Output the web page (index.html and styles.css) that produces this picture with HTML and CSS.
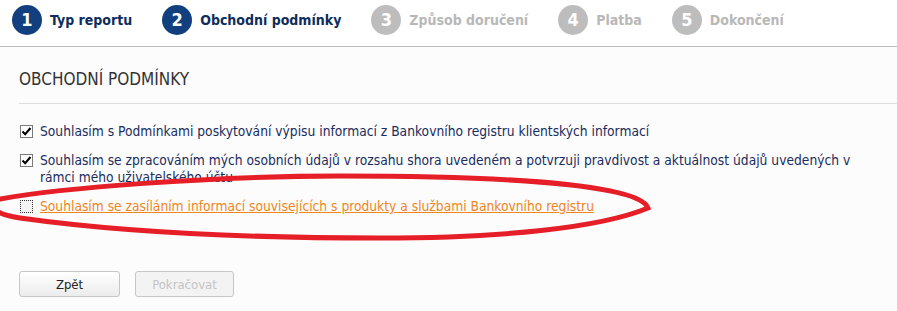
FILE: index.html
```html
<!DOCTYPE html>
<html lang="cs">
<head>
<meta charset="UTF-8">
<title>Obchodní podmínky</title>
<link rel="stylesheet" href="styles.css">
</head>
<body>
<div class="page">
  <ul class="steps">
    <li class="step done"><span class="num">1</span>Typ reportu</li>
    <li class="step done"><span class="num">2</span>Obchodní podmínky</li>
    <li class="step"><span class="num">3</span>Způsob doručení</li>
    <li class="step"><span class="num">4</span>Platba</li>
    <li class="step"><span class="num">5</span>Dokončení</li>
  </ul>

  <div class="content">
    <h2 class="title">OBCHODNÍ PODMÍNKY</h2>

    <ul class="terms">
      <li class="term">
        <span class="box checked"><svg width="11" height="11" viewBox="0 0 11 11"><path d="M1.5 5.5 L4.2 8.2 L9.5 2" fill="none" stroke="#000" stroke-width="2"/></svg></span>
        <span class="label">Souhlasím s Podmínkami poskytování výpisu informací z Bankovního registru klientských informací</span>
      </li>
      <li class="term">
        <span class="box checked"><svg width="11" height="11" viewBox="0 0 11 11"><path d="M1.5 5.5 L4.2 8.2 L9.5 2" fill="none" stroke="#000" stroke-width="2"/></svg></span>
        <span class="label">Souhlasím se zpracováním mých osobních údajů v rozsahu shora uvedeném a potvrzuji pravdivost a aktuálnost údajů uvedených v rámci mého uživatelského účtu</span>
      </li>
      <li class="term">
        <span class="box focus"></span>
        <a class="label link" href="#">Souhlasím se zasíláním informací souvisejících s produkty a službami Bankovního registru</a>
      </li>
    </ul>

    <div class="buttons">
      <button class="btn">Zpět</button>
      <button class="btn" disabled>Pokračovat</button>
    </div>
  </div>

  <!-- ručně nakreslený kroužek přes třetí souhlas -->
  <svg class="mark" width="897" height="311" viewBox="0 0 897 311">
    <path d="M648 208 C 640 186, 520 176, 340 176 C 210 176, 60 188, 0 199 C -12 205, -8 214, 20 218 C 120 232, 250 238, 380 238 C 500 238, 600 228, 648 208 Z" fill="none" stroke="#e61e27" stroke-width="5"/>
  </svg>
</div>
</body>
</html>
```

FILE: styles.css
```css
body {
  margin: 0;
  background: #fff;
  font-family: "DejaVu Sans Condensed", "DejaVu Sans", sans-serif;
  font-stretch: condensed;
  color: #1a2d5e;
}

.page {
  position: relative;
  width: 897px;
  height: 311px;
  overflow: hidden;
}

/* kroky průvodce */
.steps {
  list-style: none;
  margin: 0;
  padding: 0 0 0 12px;
  display: flex;
  align-items: center;
  gap: 30px;
  border-bottom: 1px solid #b8b8c0;
  box-sizing: border-box;
  height: 47px;
}

.step {
  display: flex;
  align-items: center;
  gap: 8px;
  font-size: 14px;
  font-weight: bold;
  color: #b8b8b8;
  margin-top: -7px;
}

.step .num {
  width: 30px;
  height: 30px;
  border-radius: 50%;
  background: #bdbdbd;
  color: #fff;
  font-size: 18px;
  line-height: 30px;
  text-align: center;
}

.step.done {
  color: #0e2d5c;
}

.step.done .num {
  background: #12407f;
}

/* obsah */
.content {
  background: #fcfcfc;
  padding: 0 0 0 19px;
  height: 264px;
}

.title {
  margin: 0;
  padding: 22px 0 14px;
  font-size: 17px;
  line-height: 20px;
  font-weight: normal;
  color: #333;
  border-bottom: 1px solid #ddd;
}

.terms {
  list-style: none;
  margin: 0;
  padding: 19px 18px 0 1px;
}

.term {
  display: flex;
  align-items: flex-start;
  gap: 7px;
  font-size: 13.7px;
  line-height: 17px;
  margin-bottom: 12px;
}

.box {
  flex: none;
  width: 11px;
  height: 11px;
  margin-top: 2px;
  border: 1px solid #7a7a7a;
  background: #fff;
  display: flex;
}

.box.focus {
  border: 1px dotted #333;
  background: #f4f4f4;
}

.link {
  color: #f0851c;
}

/* tlačítka */
.buttons {
  display: flex;
  gap: 15px;
  margin-top: 56px;
}

.btn {
  width: 101px;
  height: 26px;
  border: 1px solid #c6c6c6;
  border-radius: 3px;
  background: linear-gradient(#fff, #ececec);
  font-family: inherit;
  font-stretch: condensed;
  font-size: 13px;
  color: #222;
}

.btn:disabled {
  width: 99px;
  color: #c4c4c4;
  background: #f3f3f3;
}

.mark {
  position: absolute;
  top: 0;
  left: 0;
  pointer-events: none;
}
```
